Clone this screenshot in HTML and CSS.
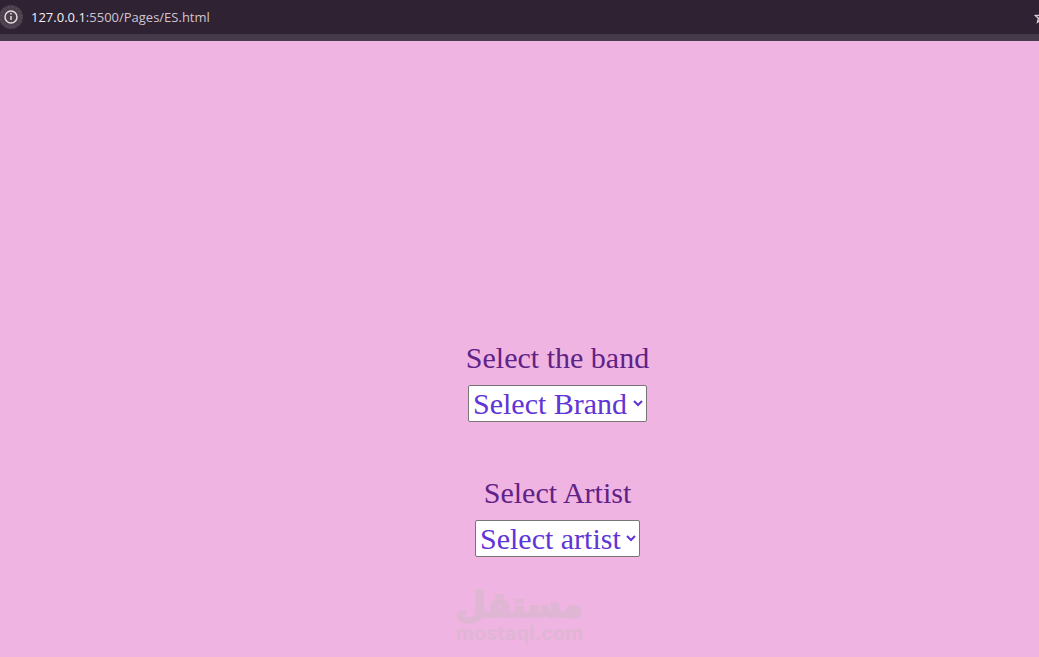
FILE: index.html
```html
<!DOCTYPE html>
<html lang="en">
<head>
<meta charset="utf-8">
<title>ES</title>
<link rel="stylesheet" href="styles.css">
</head>
<body>
<header class="toolbar">
  <div class="address">
    <button class="site-info" type="button" aria-label="View site information">
      <svg width="24" height="24" viewBox="0 0 24 24" aria-hidden="true">
        <circle cx="12" cy="12" r="12" fill="#4a404c"/>
        <circle cx="12" cy="12" r="10" fill="none" stroke="#75608a" stroke-width="1" stroke-dasharray="1 3"/>
        <circle cx="12" cy="12" r="6" fill="none" stroke="#ead9df" stroke-width="1.5"/>
        <path d="M12 11v4M12 8v1.6" stroke="#ead9df" stroke-width="1.5"/>
      </svg>
    </button>
    <span class="url"><span class="host">127.0.0.1</span>:5500/Pages/ES.html</span>
  </div>
  <button class="bookmark" type="button" aria-label="Bookmark this page">
    <svg width="14" height="14" viewBox="0 0 14 14" aria-hidden="true">
      <path d="M7 1.5l1.6 3.7 4 .3-3 2.7.9 4L7 10.1l-3.500 2.100.9-4-3-2.700 4-.3z" fill="none" stroke="#d8cbd3" stroke-width="1.4"/>
    </svg>
  </button>
</header>
<main class="page">
  <form class="picker">
    <div class="field">
      <label for="band">Select the band</label>
      <select id="band"><option>Select Brand</option></select>
    </div>
    <div class="field">
      <label for="artist">Select Artist</label>
      <select id="artist"><option>Select artist</option></select>
    </div>
  </form>
</main>
<div class="watermark">
  <span class="mark-ar" lang="ar" dir="rtl">مستقل</span>
  <span class="mark-en">mostaql.com</span>
</div>
</body>
</html>
```
FILE: styles.css
```css
* { box-sizing: border-box; }
body {
  margin: 0;
  min-height: 100vh;
  display: flex;
  flex-direction: column;
  background: #f0b4e2;
  font-family: "Liberation Serif", "Times New Roman", serif;
  overflow: hidden;
}
.toolbar {
  display: flex;
  align-items: center;
  justify-content: space-between;
  height: 41px;
  background: #2f2233;
  border-bottom: 7px solid #453a4a;
}
.address { display: flex; align-items: center; gap: 8px; }
.site-info, .bookmark {
  display: flex;
  padding: 0;
  border: 0;
  background: none;
}
.site-info { margin-left: -1px; }
.bookmark { margin-right: -9px; }
.url {
  font: 13px/20px "Open Sans", "Noto Sans", sans-serif;
  color: #cfc5d0;
}
.host { color: #f4edf4; }
.page {
  flex: 1;
  display: flex;
  flex-direction: column;
  justify-content: flex-end;
  align-items: center;
  padding: 0 0 100px 76px;
}
.picker { display: flex; flex-direction: column; gap: 54px; }
.field { display: flex; flex-direction: column; align-items: center; gap: 10px; }
.field label { font-size: 30px; line-height: 34px; color: #5f2286; }
.field select {
  font-family: inherit;
  font-size: 30px;
  color: #6034d6;
  background: #fff;
  border: 1px solid #767676;
  border-radius: 2px;
  padding-right: 2px;
}
.watermark {
  position: absolute;
  bottom: 13px;
  left: 0;
  right: 0;
  display: flex;
  flex-direction: column;
  align-items: center;
  color: #dfb7d5;
  font-weight: bold;
  pointer-events: none;
}
.mark-ar {
  font-family: "DejaVu Sans", sans-serif;
  font-size: 35px;
  line-height: 34px;
  -webkit-text-stroke: 2px #dfb7d5;
}
.mark-en { font-family: Inter, "Liberation Sans", sans-serif; font-size: 20px; line-height: 22px; }
```
